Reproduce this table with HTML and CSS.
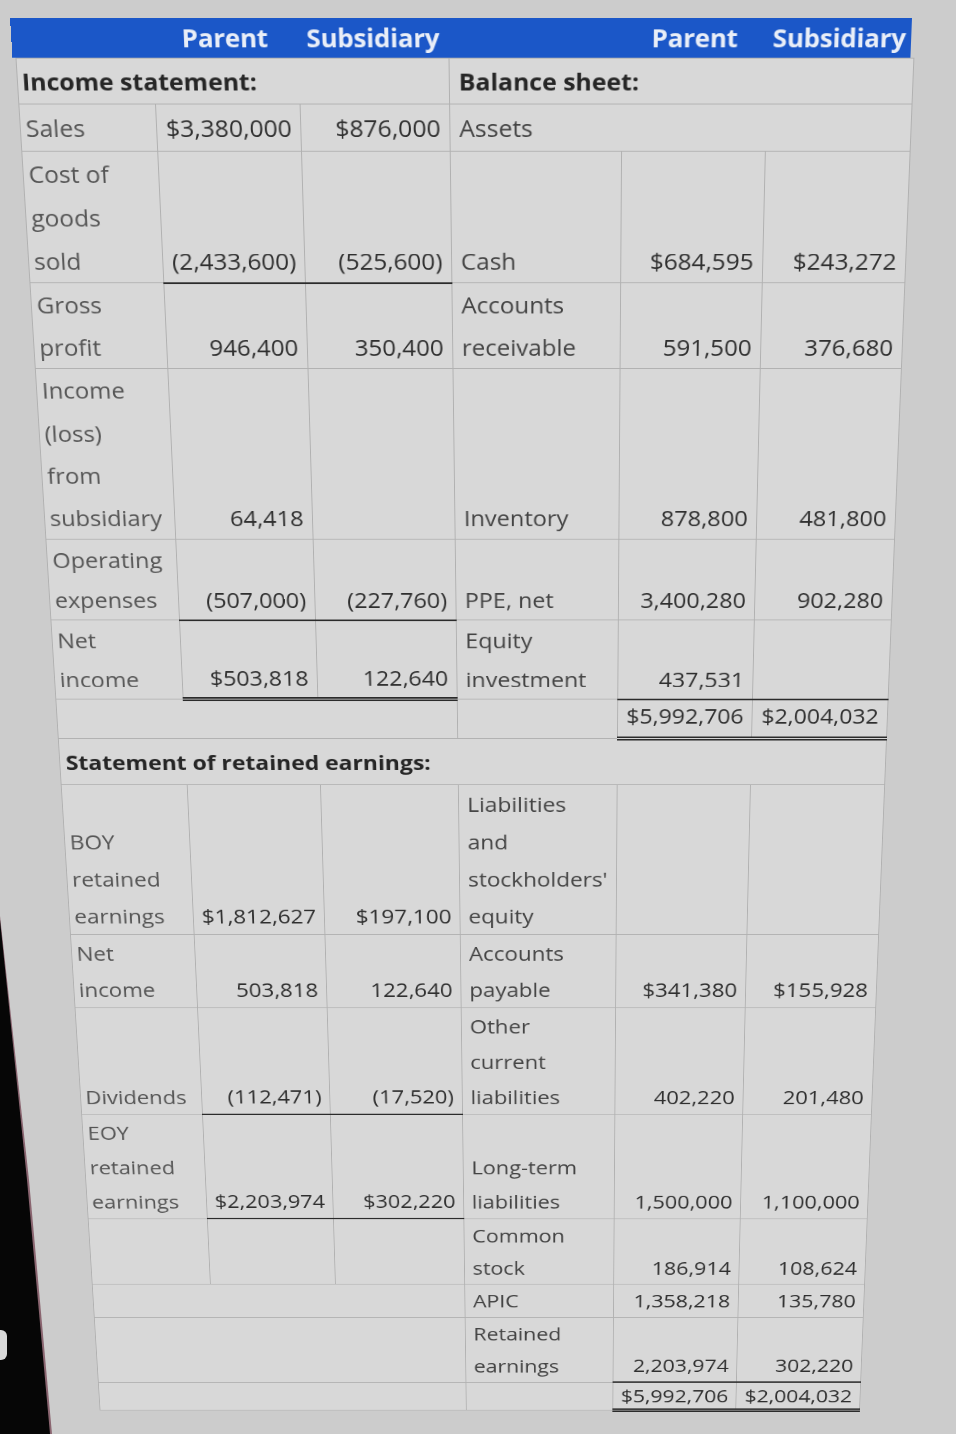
FILE: index.html
```html
<!DOCTYPE html>
<html lang="en">
<head>
<meta charset="utf-8">
<title>Consolidation worksheet</title>
<link rel="stylesheet" href="styles.css">
</head>
<body>
<div class="page">
  <div class="sheet">
    <div class="hdr">
      <span class="h1"></span><span class="h2">Parent</span><span class="h3">Subsidiary</span><span class="h4"></span><span class="h5">Parent</span><span class="h6">Subsidiary</span>
    </div>
    <table class="fin">
      <colgroup>
        <col class="w1"><col class="w2"><col class="w3"><col class="w4"><col class="w5"><col class="w6">
      </colgroup>
      <tr class="sec"><td colspan="3">Income statement:</td><td colspan="3" class="bs">Balance sheet:</td></tr>
      <tr class="r50"><td class="lab">Sales</td><td class="num">$3,380,000</td><td class="num">$876,000</td><td colspan="3" class="lab2">Assets</td></tr>
      <tr><td class="lab">Cost of<br>goods<br>sold</td><td class="num ul">(2,433,600)</td><td class="num ul">(525,600)</td><td class="lab2">Cash</td><td class="num">$684,595</td><td class="num">$243,272</td></tr>
      <tr><td class="lab">Gross<br>profit</td><td class="num">946,400</td><td class="num">350,400</td><td class="lab2">Accounts<br>receivable</td><td class="num">591,500</td><td class="num">376,680</td></tr>
      <tr class="r49"><td class="lab">Income<br>(loss)<br>from<br>subsidiary</td><td class="num">64,418</td><td class="num"></td><td class="lab2">Inventory</td><td class="num">878,800</td><td class="num">481,800</td></tr>
      <tr><td class="lab">Operating<br>expenses</td><td class="num ul">(507,000)</td><td class="num ul">(227,760)</td><td class="lab2">PPE, net</td><td class="num">3,400,280</td><td class="num">902,280</td></tr>
      <tr><td class="lab">Net<br>income</td><td class="num dul">$503,818</td><td class="num dul">122,640</td><td class="lab2">Equity<br>investment</td><td class="num ul">437,531</td><td class="num ul"></td></tr>
      <tr class="tot1"><td colspan="3"></td><td></td><td class="num dul">$5,992,706</td><td class="num dul">$2,004,032</td></tr>
      <tr class="sec sre"><td colspan="6">Statement of retained earnings:</td></tr>
      <tr><td class="lab">BOY<br>retained<br>earnings</td><td class="num">$1,812,627</td><td class="num">$197,100</td><td class="lab2">Liabilities<br>and<br>stockholders'<br>equity</td><td></td><td></td></tr>
      <tr><td class="lab">Net<br>income</td><td class="num">503,818</td><td class="num">122,640</td><td class="lab2">Accounts<br>payable</td><td class="num">$341,380</td><td class="num">$155,928</td></tr>
      <tr><td class="lab">Dividends</td><td class="num ul">(112,471)</td><td class="num ul">(17,520)</td><td class="lab2">Other<br>current<br>liabilities</td><td class="num">402,220</td><td class="num">201,480</td></tr>
      <tr><td class="lab">EOY<br>retained<br>earnings</td><td class="num ul">$2,203,974</td><td class="num ul">$302,220</td><td class="lab2">Long-term<br>liabilities</td><td class="num">1,500,000</td><td class="num">1,100,000</td></tr>
      <tr class="r46"><td></td><td></td><td></td><td class="lab2">Common<br>stock</td><td class="num">186,914</td><td class="num">108,624</td></tr>
      <tr class="r47"><td colspan="3"></td><td class="lab2">APIC</td><td class="num">1,358,218</td><td class="num">135,780</td></tr>
      <tr class="r47"><td colspan="3"></td><td class="lab2">Retained<br>earnings</td><td class="num ul">2,203,974</td><td class="num ul">302,220</td></tr>
      <tr class="tot2"><td colspan="3"></td><td></td><td class="num dul">$5,992,706</td><td class="num dul">$2,004,032</td></tr>
    </table>
  </div>
  <div class="bezel-edge"></div>
  <div class="bezel"></div>
  <div class="led"></div>
</div>
</body>
</html>
```

FILE: styles.css
```css
html, body {
  margin: 0;
  padding: 0;
  background: #cbcbcb;
}

.page {
  position: relative;
  width: 956px;
  height: 1434px;
  overflow: hidden;
  box-sizing: border-box;
  padding: 18px 0 0 13px;
  background: #cccccc;
  font-family: "Open Sans", "DejaVu Sans", sans-serif;
}

.sheet {
  width: 902px;
  transform-origin: 50% 0;
  transform: perspective(2913px) rotateX(-18.3deg) skewX(0.6deg);
}

.hdr {
  display: flex;
  width: 902px;
  margin-left: -3px;
  height: 42px;
  background: #1b57c8;
  color: #e9eef8;
  font-weight: 700;
  font-size: 26px;
  line-height: 42px;
  letter-spacing: -0.2px;
}

.hdr span {
  flex: none;
  text-align: center;
  white-space: nowrap;
}

.h1 { width: 141px; }
.h2 { width: 146px; }
.h3 { width: 151px; }
.h4 { width: 174px; }
.h5 { width: 146px; }
.h6 { width: 144px; }

.fin {
  width: 902px;
  border-collapse: collapse;
  table-layout: fixed;
}

.w1 { width: 138px; }
.w2 { width: 146px; }
.w3 { width: 151px; }
.w4 { width: 174px; }
.w5 { width: 146px; }
.w6 { width: 147px; }

.fin td {
  border: 1px solid #b1b1b1;
  background: #d8d8d8;
  font-size: 25px;
  line-height: 48px;
  padding: 0 9px;
  vertical-align: bottom;
  white-space: nowrap;
  color: #2f2f2f;
}

.fin tr.r50 td { line-height: 50px; }
.fin tr.r49 td { line-height: 49.5px; }
.fin tr.r47 td { line-height: 47px; }
.fin tr.r46 td { line-height: 46px; }

.fin tr.tot1 td {
  line-height: 38px;
  padding-bottom: 7px;
}

.fin tr.tot2 td {
  line-height: 38px;
  padding-bottom: 0;
}

.sec td {
  font-weight: 700;
  color: #262626;
}

.fin .sec td {
  padding-left: 4px;
}

.fin .sec td.bs {
  padding-left: 9px;
}

.fin .sre td {
  line-height: 55px;
  vertical-align: middle;
  padding-left: 6px;
}

.fin td.lab {
  color: #555555;
  padding-left: 5px;
}

.fin td.lab2 {
  color: #444444;
}

.fin td.num {
  text-align: right;
}

.fin td.ul {
  border-bottom: 2px solid #2b2b2b;
}

.fin td.dul {
  border-bottom: 5px double #2b2b2b;
}

.bezel-edge {
  position: absolute;
  left: 0;
  top: 0;
  width: 60px;
  height: 1434px;
  background: #8a6570;
  clip-path: polygon(0 916px, 29px 1180px, 52px 1434px, 0 1434px);
}

.bezel {
  position: absolute;
  left: 0;
  top: 0;
  width: 60px;
  height: 1434px;
  background: #060606;
  clip-path: polygon(0 920px, 27px 1180px, 50px 1434px, 0 1434px);
}

.led {
  position: absolute;
  left: -5px;
  top: 1330px;
  width: 12px;
  height: 30px;
  border-radius: 6px;
  background: #d9d9d9;
}
```
